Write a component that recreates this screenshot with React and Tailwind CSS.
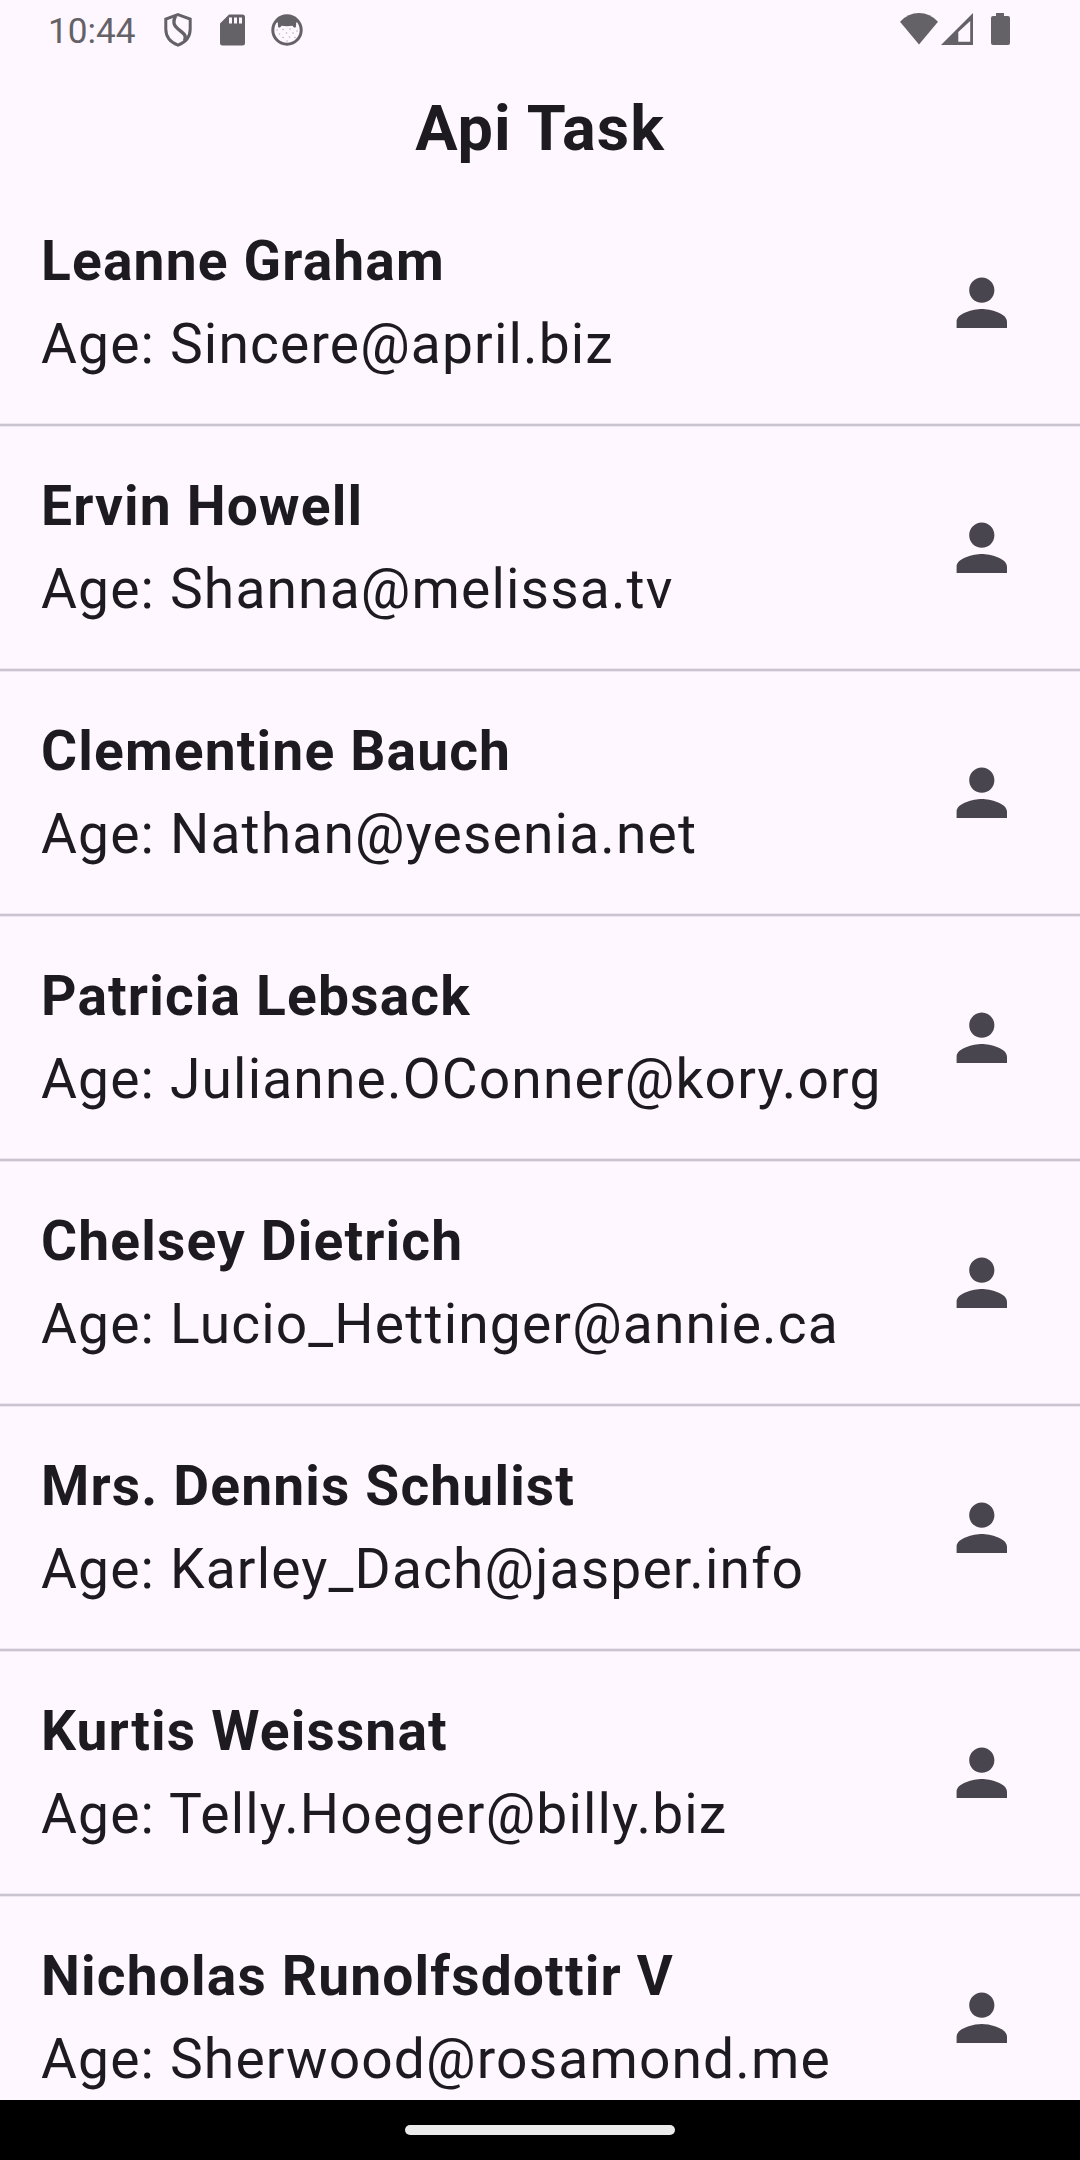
const users = [
  { name: "Leanne Graham", email: "Sincere@april.biz" },
  { name: "Ervin Howell", email: "Shanna@melissa.tv" },
  { name: "Clementine Bauch", email: "Nathan@yesenia.net" },
  { name: "Patricia Lebsack", email: "Julianne.OConner@kory.org" },
  { name: "Chelsey Dietrich", email: "Lucio_Hettinger@annie.ca" },
  { name: "Mrs. Dennis Schulist", email: "Karley_Dach@jasper.info" },
  { name: "Kurtis Weissnat", email: "Telly.Hoeger@billy.biz" },
  { name: "Nicholas Runolfsdottir V", email: "Sherwood@rosamond.me" },
];

function ShieldIcon() {
  return (
    <svg width="30" height="36" viewBox="0 0 30 36" fill="none" stroke="#656267" strokeWidth="3">
      <path d="M15 2.6 L27.2 7 V17 C27.2 25 22 30.5 15 33.2 C8 30.5 2.8 25 2.8 17 V7 Z" />
      <path d="M12.5 4 C9.5 10 10.5 13.5 15 17 C20.5 21.3 24 23 21.5 29" strokeWidth="3.4" />
    </svg>
  );
}

function SdCardIcon() {
  return (
    <svg width="25" height="32" viewBox="0 0 25 32">
      <path
        fill="#656267"
        fillRule="evenodd"
        d="M9 0.5 H22.5 Q25 0.5 25 3 V29 Q25 31.5 22.5 31.5 H2.5 Q0 31.5 0 29 V9.5 Z M9 3.5 V9.5 H12 V3.5 Z M14 3.5 V9.5 H17 V3.5 Z M19 3.5 V9.5 H22 V3.5 Z"
      />
    </svg>
  );
}

function FaceIcon() {
  return (
    <svg width="32" height="32" viewBox="0 0 32 32">
      <circle cx="16" cy="16" r="14.2" fill="none" stroke="#656267" strokeWidth="3" />
      <path
        fill="#656267"
        d="M5 6 Q16 -3 27 6 L25 9.5 Q25.5 13.5 24 13.8 Q22 13.5 21.5 11.8 Q16 12.6 10.5 11.8 Q10 13.5 8 13.8 Q6.5 13.5 7 9.5 Z"
      />
      <g fill="#656267" opacity="0.45">
        <circle cx="6" cy="16" r="0.8" /><circle cx="12" cy="15.5" r="0.8" />
        <circle cx="19" cy="15" r="0.8" /><circle cx="26" cy="17" r="0.8" />
        <circle cx="8.5" cy="20" r="0.8" /><circle cx="15.5" cy="19" r="0.8" />
        <circle cx="22" cy="19" r="0.8" /><circle cx="12" cy="23.5" r="0.8" />
        <circle cx="18.5" cy="23" r="0.8" /><circle cx="24" cy="23.5" r="0.8" />
        <circle cx="16" cy="27" r="0.8" />
      </g>
    </svg>
  );
}

function StatusBar() {
  return (
    <header className="flex h-[63px] shrink-0 items-start justify-between pl-[48px] pr-[70px]">
      <div className="flex">
        <span className="mt-[11px] w-[115px] text-[35.2px] leading-[40px] text-[#656267]">10:44</span>
        <div className="mt-[12px]"><ShieldIcon /></div>
        <div className="ml-[27px] mt-[14px]"><SdCardIcon /></div>
        <div className="ml-[26px] mt-[14px]"><FaceIcon /></div>
      </div>
      <div className="mt-[13px] flex">
        <svg width="38" height="32" viewBox="0 0 38 32" fill="#656267">
          <path d="M19 31.5 L0 8.8 Q8 0 19 0 Q30 0 38 8.8 Z" />
        </svg>
        <svg className="ml-[3px]" width="32" height="32" viewBox="0 0 32 32" fill="#656267">
          <path fillRule="evenodd" d="M0 32 L32 0 V32 Z M17.3 19 V28.8 H29.2 V8 Z" />
        </svg>
        <svg className="ml-[18px]" width="19" height="32" viewBox="0 0 19 32" fill="#656267">
          <path d="M5 0 H13 V3 H17 Q19 3 19 5 V30 Q19 32 17 32 H2 Q0 32 0 30 V5 Q0 3 2 3 H5 Z" />
        </svg>
      </div>
    </header>
  );
}

function UserRow({ name, email }) {
  return (
    <li className="flex h-[245px] shrink-0 flex-col justify-between">
      <div className="flex items-start justify-between pl-[41px] pr-[60px]">
        <div className="mt-[38px] whitespace-nowrap text-[55.15px] leading-[83px] tracking-[1.15px] text-[#1d1b20]">
          <p className="font-bold">{name}</p>
          <p>Age: {email}</p>
        </div>
        <svg className="mt-[82.5px] h-[75.6px] w-[75.6px]" viewBox="0 0 24 24" fill="#49454f">
          <path d="M12 12c2.21 0 4-1.79 4-4s-1.79-4-4-4-4 1.79-4 4 1.79 4 4 4zm0 2c-2.67 0-8 1.34-8 4v2h16v-2c0-2.66-5.33-4-8-4z" />
        </svg>
      </div>
      <div className="h-1 border-y border-[#ede6f0] bg-[#cac4d0]" />
    </li>
  );
}

export default function App() {
  return (
    <div className="flex h-[2160px] w-[1080px] flex-col overflow-hidden bg-[#fef7ff] font-['Roboto',sans-serif]">
      <StatusBar />
      <h1 className="flex h-[119px] shrink-0 items-center justify-center pt-[12px] text-[63px] font-bold leading-[80px] tracking-[1px] text-[#1d1b20]">
        Api Task
      </h1>
      <ul className="flex min-h-0 flex-1 flex-col overflow-hidden">
        {users.map((user) => (
          <UserRow key={user.name} {...user} />
        ))}
      </ul>
      <nav className="flex h-[60px] shrink-0 items-center justify-center bg-black">
        <div className="h-[10px] w-[270px] rounded-full bg-[#ebebeb]" />
      </nav>
    </div>
  );
}
